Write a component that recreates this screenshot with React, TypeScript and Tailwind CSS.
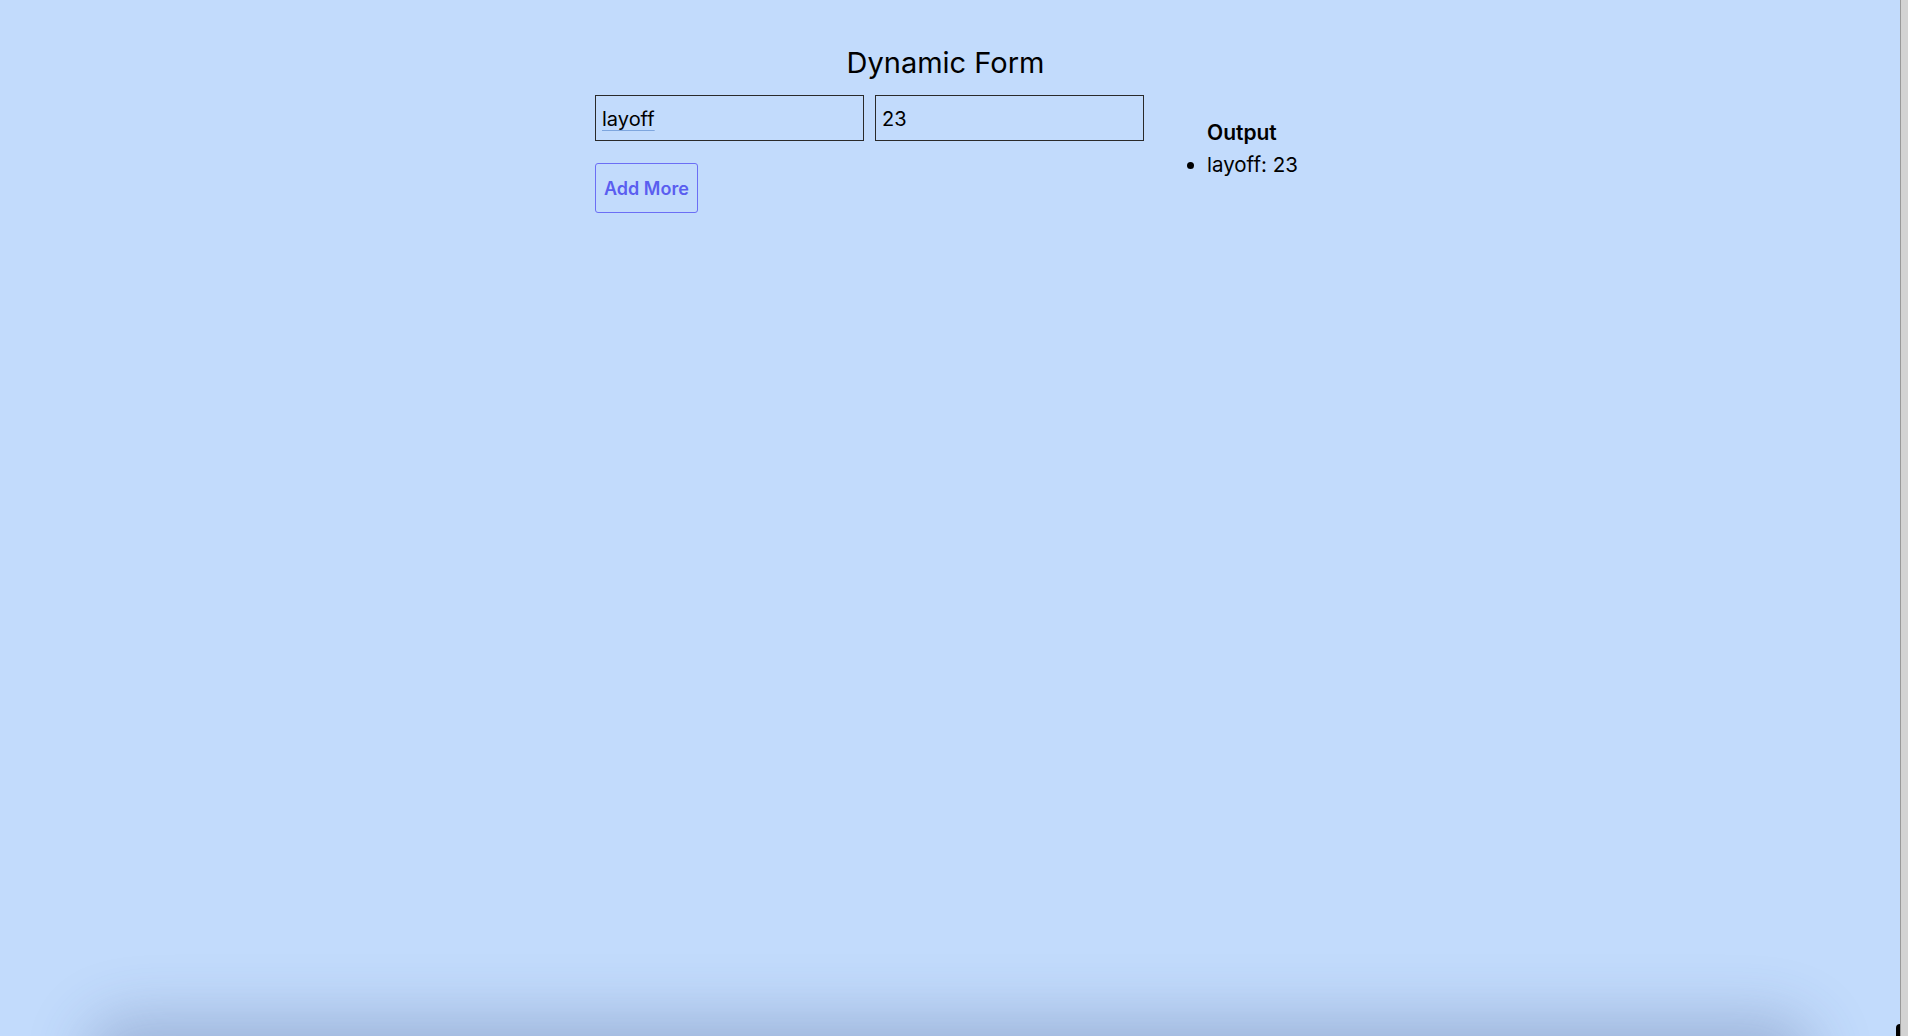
import React from "react";

export default function App() {
  return (
    <div className="flex h-[1036px] w-full overflow-hidden" style={{ fontFamily: "Inter, 'Noto Sans', sans-serif" }}>
      <div className="relative flex-1 overflow-hidden bg-[#c2dbfc] text-black">
        <h1 className="pt-[45px] pr-[9px] text-center text-[29px] leading-[35px] font-normal">Dynamic Form</h1>
        <div className="mt-[15px] flex justify-center">
          <div className="w-[549px]">
            <div className="flex gap-[11px]">
              <input
                defaultValue="layoff"
                className="h-[46px] w-[269px] border border-[#2a2a2a] bg-transparent px-[6px] pt-[2px] text-[20px] text-black underline decoration-[#7ea6de] decoration-[1.5px] underline-offset-[4px] outline-none"
              />
              <input
                defaultValue="23"
                className="h-[46px] w-[269px] border border-[#2a2a2a] bg-transparent px-[6px] pt-[2px] text-[20px] text-black outline-none"
              />
            </div>
            <button className="mt-[22px] h-[50px] rounded-[3px] border border-[#6b6ef5] px-[8px] text-[18px] font-semibold text-[#5a5ef0]">
              Add More
            </button>
          </div>
          <div className="mt-[22px] ml-[23px] w-[138px] pl-[40px] text-[20.5px] leading-[32px]">
            <div className="text-[21px] font-semibold">Output</div>
            <ul className="list-disc">
              <li>layoff: 23</li>
            </ul>
          </div>
        </div>
        <div className="pointer-events-none absolute left-[110px] right-[110px] top-[1042px] h-[40px] rounded-full shadow-[0_0_60px_25px_rgba(60,80,130,0.28)]" />
        <div className="pointer-events-none absolute bottom-0 right-0 h-[12px] w-[4px] rounded-tl-full bg-black" />
      </div>
      <div className="w-[8px] border-l border-[#9a9a9a] bg-[#d3d3d3]" />
    </div>
  );
}
